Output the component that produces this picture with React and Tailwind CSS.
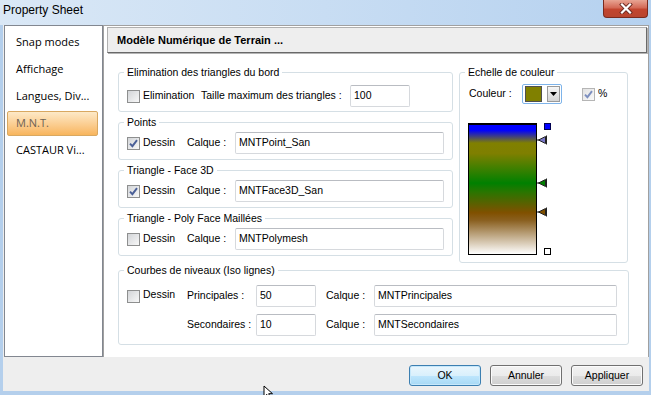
import React from "react";

function Check({ checked, light }) {
  return (
    <span
      className={
        light
          ? "w-[13px] h-[13px] shrink-0 border border-[#b5b5b5] bg-gradient-to-br from-[#e2e2e2] to-[#fafafa] flex items-center justify-center"
          : "w-[13px] h-[13px] shrink-0 border border-[#8e8f8f] bg-gradient-to-br from-[#d3d5d8] to-[#f8f8f8] flex items-center justify-center"
      }
    >
      {checked && (
        <svg width="9" height="9" viewBox="0 0 9 9">
          <path
            d="M1 4.6 L3.4 7.2 L8 1.2"
            stroke={light ? "#7d8fbf" : "#4a5f97"}
            strokeWidth="1.9"
            fill="none"
          />
        </svg>
      )}
    </span>
  );
}

function Field({ className, children }) {
  return (
    <div
      className={
        "h-[22px] shrink-0 bg-white border border-[#d6d9dd] border-t-[#b9bcc2] rounded-[2px] flex items-center pl-[3px] pb-[1px] " +
        className
      }
    >
      {children}
    </div>
  );
}

function Group({ title, className, children }) {
  return (
    <fieldset
      className={
        "border border-[#d5dfe5] rounded-[3px] px-[8px] min-w-0 " + className
      }
    >
      <legend className="ml-[-3px] px-[3px] leading-[13px]">{title}</legend>
      {children}
    </fieldset>
  );
}

function Tri({ color, top }) {
  return (
    <svg
      width="11"
      height="10"
      viewBox="0 0 11 10"
      className="absolute left-0"
      style={{ top: top - 5 }}
    >
      <line x1="0" y1="5" x2="2" y2="5" stroke="#222" strokeWidth="1" />
      <polygon points="1.5,5 8.5,1.5 8.5,8.5" fill={color} stroke="#222" strokeWidth="1" />
      <line x1="9.5" y1="0.5" x2="9.5" y2="9.5" stroke="#222" strokeWidth="1" />
    </svg>
  );
}

function Btn({ children, def }) {
  return (
    <div
      className={
        def
          ? "w-[72px] h-[21px] rounded-[3px] border border-[#3c7fb1] bg-[linear-gradient(to_bottom,#eaf6fd_0%,#d9f0fc_50%,#bee6fd_51%,#a7d9f5_100%)] shadow-[inset_0_0_0_1px_#c6e8fb] flex items-center justify-center"
          : "w-[72px] h-[21px] rounded-[3px] border border-[#707070] bg-[linear-gradient(to_bottom,#f2f2f2_0%,#ebebeb_50%,#dddddd_51%,#cfcfcf_100%)] shadow-[inset_0_0_0_1px_#fbfbfb] flex items-center justify-center"
      }
    >
      {children}
    </div>
  );
}

export default function App() {
  const items = ["Snap modes", "Affichage", "Langues, Div...", "M.N.T.", "CASTAUR Vi..."];
  return (
    <div className="w-[651px] h-[395px] bg-[#b4cfec] relative overflow-hidden font-['Liberation_Sans',Arial,sans-serif] text-[10.5px] text-black">
      {/* Title bar */}
      <div className="h-[25px] flex items-start bg-gradient-to-r from-[#dae8f6] via-[#c8ddf3] to-[#b5d1ef]">
        <span className="ml-[3px] mt-[3px] text-[12px] leading-[15px]">Property Sheet</span>
        <div className="ml-auto mr-[3px] w-[45px] h-[18px] rounded-b-[4px] border border-t-0 border-[#7a2a1e] bg-[linear-gradient(to_bottom,#e8a493_0%,#d46a57_45%,#c2452f_55%,#b8452f_100%)] flex items-center justify-center">
          <svg width="14" height="11" viewBox="0 0 14 11">
            <path d="M3 1.5 L11 9.5 M11 1.5 L3 9.5" stroke="#6b2a22" strokeWidth="4" strokeLinecap="square" />
            <path d="M3 1.5 L11 9.5 M11 1.5 L3 9.5" stroke="#ffffff" strokeWidth="2.2" strokeLinecap="square" />
          </svg>
        </div>
      </div>

      {/* Body */}
      <div className="ml-[3px] w-[646px] h-[366px] bg-[#eeeeee] flex flex-col">
        <div className="flex h-[332px]">
          {/* Left list */}
          <div className="ml-[1px] w-[99px] h-[332px] bg-white border border-[#828790] pt-[3px] pl-[2px] pr-[4px] flex flex-col font-['Open_Sans',sans-serif] text-[11px]">
            {items.map((t) =>
              t === "M.N.T." ? (
                <div key={t} className="h-[27px] py-[1px]">
                  <div className="h-full flex items-center pl-[8px] border border-[#d9a861] rounded-[2px] bg-gradient-to-b from-[#fde9c7] to-[#f8b55c] text-[#6e6254]">
                    {t}
                  </div>
                </div>
              ) : (
                <div key={t} className="h-[27px] flex items-center pl-[9px]">
                  {t}
                </div>
              )
            )}
          </div>

          {/* Right panel */}
          <div className="w-[546px] h-[332px] bg-white border-l border-t border-r border-[#a0a0a0] flex flex-col">
            <div className="mt-[1px] ml-[3px] mr-[1px] h-[26px] bg-[#eeeeee] border border-[#b0b0b0] border-r-[#696969] border-b-[#696969] shadow-[1px_1px_0_#b4b4b4] flex items-center pl-[9px] font-bold text-[11px]">
              Modèle Numérique de Terrain ...
            </div>

            <div className="mt-[13px] ml-[14px] flex items-start gap-[6px]">
              {/* Left column */}
              <div className="w-[335px] flex flex-col gap-[4px]">
                <Group title="Elimination des triangles du bord" className="h-[46px]">
                  <div className="mt-[6px] h-[22px] flex items-center">
                    <Check />
                    <span className="ml-[3px] w-[58px]">Elimination</span>
                    <span className="w-[149px]">Taille maximum des triangles :</span>
                    <Field className="w-[60px]">100</Field>
                  </div>
                </Group>
                <Group title="Points" className="h-[44px]">
                  <div className="mt-[3px] h-[22px] flex items-center">
                    <Check checked />
                    <span className="ml-[3px] w-[44px]">Dessin</span>
                    <span className="w-[48px]">Calque :</span>
                    <Field className="w-[209px]">MNTPoint_San</Field>
                  </div>
                </Group>
                <Group title="Triangle - Face 3D" className="h-[44px]">
                  <div className="mt-[3px] h-[22px] flex items-center">
                    <Check checked />
                    <span className="ml-[3px] w-[44px]">Dessin</span>
                    <span className="w-[48px]">Calque :</span>
                    <Field className="w-[209px]">MNTFace3D_San</Field>
                  </div>
                </Group>
                <Group title="Triangle - Poly Face Maillées" className="h-[44px]">
                  <div className="mt-[3px] h-[22px] flex items-center">
                    <Check />
                    <span className="ml-[3px] w-[44px]">Dessin</span>
                    <span className="w-[48px]">Calque :</span>
                    <Field className="w-[209px]">MNTPolymesh</Field>
                  </div>
                </Group>
              </div>

              {/* Echelle de couleur */}
              <Group title="Echelle de couleur" className="w-[169px] h-[197px]">
                <div className="mt-[5px] h-[20px] flex items-center">
                  <span className="ml-[1px] w-[53px]">Couleur :</span>
                  <div className="w-[40px] h-[20px] border border-[#7eb4ea] rounded-[2px] bg-white flex items-center pl-[2px] pr-[1px]">
                    <div className="w-[17px] h-[16px] bg-[#808000] border border-[#505050]" />
                    <div className="ml-auto w-[13px] h-[16px] border border-[#9a9a9a] bg-gradient-to-b from-[#f6f6f6] to-[#d4d4d4] flex items-center justify-center">
                      <svg width="7" height="4" viewBox="0 0 7 4">
                        <polygon points="0,0 7,0 3.5,4" fill="#000" />
                      </svg>
                    </div>
                  </div>
                  <span className="ml-[20px]">
                    <Check checked light />
                  </span>
                  <span className="ml-[3px]">%</span>
                </div>
                <div className="mt-[19px] flex">
                  <div className="w-[69px] h-[132px] border border-black border-t-2 bg-[linear-gradient(to_bottom,#0000ff_0%,#0000ff_4%,#808000_14%,#7f7f00_22%,#008000_45%,#2a7500_52%,#805000_68%,#8a6020_74%,#ffffff_100%)]" />
                  <div className="relative w-[16px] h-[132px]">
                    <div className="absolute left-[7px] top-0 w-[7px] h-[7px] bg-[#0000ff] border border-[#000050]" />
                    <Tri color="#7a78c8" top={17} />
                    <Tri color="#008000" top={60} />
                    <Tri color="#805000" top={89} />
                    <div className="absolute left-[7px] top-[125px] w-[7px] h-[7px] bg-white border border-black" />
                  </div>
                </div>
              </Group>
            </div>

            {/* Courbes de niveaux */}
            <Group title="Courbes de niveaux (Iso lignes)" className="mt-[1px] ml-[14px] w-[511px] h-[81px]">
              <div className="mt-[8px] h-[22px] flex items-center">
                <Check />
                <span className="ml-[3px] w-[44px] mb-[2px]">Dessin</span>
                <span className="w-[69px]">Principales :</span>
                <Field className="w-[60px]">50</Field>
                <span className="ml-[10px] w-[48px]">Calque :</span>
                <Field className="w-[243px]">MNTPrincipales</Field>
              </div>
              <div className="mt-[7px] h-[22px] flex items-center">
                <span className="w-[60px]" />
                <span className="w-[69px]">Secondaires :</span>
                <Field className="w-[60px]">10</Field>
                <span className="ml-[10px] w-[48px]">Calque :</span>
                <Field className="w-[243px]">MNTSecondaires</Field>
              </div>
            </Group>
          </div>
        </div>

        {/* Buttons */}
        <div className="flex justify-end gap-[9px] pt-[8px] pr-[6px] text-[10.5px]">
          <Btn def>OK</Btn>
          <Btn>Annuler</Btn>
          <Btn>Appliquer</Btn>
        </div>
      </div>

      {/* mouse cursor */}
      <svg width="12" height="14" viewBox="0 0 12 14" className="absolute left-[263px] top-[385px]">
        <path d="M1 1 L1 12 L3.8 9.4 L5.8 13.5 L7.6 12.7 L5.7 8.7 L9.5 8.7 Z" fill="#fff" stroke="#000" strokeWidth="1" />
      </svg>
    </div>
  );
}
